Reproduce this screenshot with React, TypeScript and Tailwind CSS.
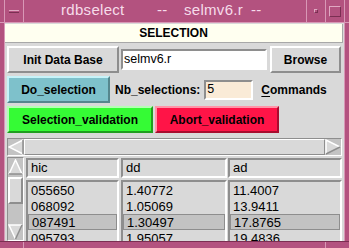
import React from "react";

const raised = "border-2 border-t-white border-l-white border-r-[#8e8e8e] border-b-[#8e8e8e]";
const sunken = "border-2 border-t-[#8e8e8e] border-l-[#8e8e8e] border-r-white border-b-white";
const frameLine = "border-[#d898b6]";

const ArrowLeft = () => (
  <svg width="16" height="16" viewBox="0 0 16 16">
    <polygon points="1,8 15,1 15,15" fill="#d9d9d9" />
    <polyline points="15,1 1,8 15,15" stroke="#ffffff" strokeWidth="1.5" fill="none" />
    <line x1="15" y1="1" x2="15" y2="15" stroke="#8e8e8e" strokeWidth="1.5" />
  </svg>
);

const ArrowRight = () => (
  <svg width="16" height="16" viewBox="0 0 16 16">
    <polygon points="15,8 1,1 1,15" fill="#d9d9d9" />
    <polyline points="1,15 1,1 15,8" stroke="#ffffff" strokeWidth="1.5" fill="none" />
    <line x1="15" y1="8" x2="1" y2="15" stroke="#8e8e8e" strokeWidth="1.5" />
  </svg>
);

const ArrowUp = () => (
  <svg width="15" height="16" viewBox="0 0 15 16">
    <polygon points="7.5,1 1,15 14,15" fill="#d9d9d9" />
    <polyline points="1,15 7.5,1 14,15" stroke="#ffffff" strokeWidth="1.5" fill="none" />
    <line x1="1" y1="15" x2="14" y2="15" stroke="#8e8e8e" strokeWidth="1.5" />
  </svg>
);

const ArrowDown = () => (
  <svg width="15" height="16" viewBox="0 0 15 16">
    <polygon points="7.5,15 1,1 14,1" fill="#d9d9d9" />
    <polyline points="7.5,15 1,1 14,1" stroke="#ffffff" strokeWidth="1.5" fill="none" />
    <line x1="14" y1="1" x2="7.5" y2="15" stroke="#8e8e8e" strokeWidth="1.5" />
  </svg>
);

const columns = [
  { head: "hic", width: "w-[93px] ml-[2px]", rows: ["055650", "068092", "087491", "095793"] },
  { head: "dd", width: "w-[106px] ml-[2px]", rows: ["1.40772", "1.05069", "1.30497", "1.95057"] },
  { head: "ad", width: "w-[114px] ml-[1px]", rows: ["11.4007", "13.9411", "17.8765", "19.4836"] },
];

export default function App() {
  return (
    <div className="w-[349px] h-[248px] bg-[#b3527f] flex flex-col overflow-hidden font-['Liberation_Sans',Arial,sans-serif] text-black">
      {/* window title bar */}
      <div className={`flex h-[23px] shrink-0 border-b ${frameLine}`}>
        <div className={`w-[5px] border-r ${frameLine}`} />
        <div className={`w-[19px] flex items-center justify-center border-r ${frameLine}`}>
          <div className="w-[10px] h-[3px] bg-[#b3527f] border-t border-t-[#e0a8c2] border-b border-b-[#7a2f52]" />
        </div>
        <div className="flex-1 flex items-center pl-[37px] text-[15px] tracking-[0.3px] text-[#f6dcea] whitespace-nowrap pb-[1px]">
          <span className="w-[96px]">rdbselect</span>
          <span className="w-[27px]">--</span>
          <span className="w-[67px]">selmv6.r</span>
          <span>--</span>
        </div>
        <div className={`w-[19px] flex items-center justify-center border-l ${frameLine}`}>
          <div className="w-[4px] h-[4px] bg-[#b3527f] border-t border-l border-t-[#e0a8c2] border-l-[#e0a8c2] border-b border-r border-b-[#7a2f52] border-r-[#7a2f52]" />
        </div>
        <div className={`w-[19px] flex items-center justify-center border-l ${frameLine}`}>
          <div className="w-[12px] h-[11px] border border-t-[#e0a8c2] border-l-[#e0a8c2] border-b-[#7a2f52] border-r-[#7a2f52]" />
        </div>
        <div className={`w-[5px] border-l ${frameLine}`} />
      </div>

      <div className="flex flex-1 min-h-0">
        <div className={`w-[5px] border-r ${frameLine}`} />
        <div className="flex-1 bg-[#d9d9d9] flex flex-col min-w-0">
          {/* SELECTION label */}
          <div className="mt-[1px] mr-[1px] h-[19px] bg-[#fffff0] border-b border-r border-b-[#a8a8a8] border-r-[#a8a8a8] flex items-center justify-center text-[12px] font-bold">
            SELECTION
          </div>

          {/* row 1 */}
          <div className="mt-[3px] h-[27px] flex items-center pl-[2px]">
            <div className={`w-[112px] h-[27px] bg-[#d9d9d9] ${raised} flex items-center justify-center text-[12px] font-bold`}>
              Init Data Base
            </div>
            <div className={`ml-[2px] w-[146px] h-[21px] bg-white ${sunken} flex items-center pl-[1px] text-[12.5px]`}>
              selmv6.r
            </div>
            <div className={`ml-[3px] w-[71px] h-[27px] bg-[#d9d9d9] ${raised} flex items-center justify-center text-[12px] font-bold`}>
              Browse
            </div>
          </div>

          {/* row 2 */}
          <div className="mt-[3px] h-[27px] flex items-center pl-[2px]">
            <div className="w-[103px] h-[27px] bg-[#7ec1cb] border-2 border-t-[#c6f2f8] border-l-[#c6f2f8] border-r-[#55878e] border-b-[#55878e] flex items-center justify-center text-[12px] font-bold">
              Do_selection
            </div>
            <div className="ml-[5px] text-[12px] font-bold">Nb_selections:</div>
            <div className={`ml-[4px] w-[49px] h-[20px] bg-[#faebd7] ${sunken} flex items-center pl-[1px] text-[12.5px]`}>
              5
            </div>
            <div className="ml-[8px] text-[12px] font-bold">
              <span className="underline underline-offset-2">C</span>ommands
            </div>
          </div>

          {/* row 3 */}
          <div className="mt-[3px] h-[27px] flex items-center pl-[2px]">
            <div className="w-[146px] h-[27px] bg-[#35fb35] border-2 border-t-[#b4ffb4] border-l-[#b4ffb4] border-r-[#1f9e1f] border-b-[#1f9e1f] flex items-center justify-center text-[12px] font-bold">
              Selection_validation
            </div>
            <div className="ml-[2px] w-[124px] h-[27px] bg-[#ff1447] border-2 border-t-[#ff94a8] border-l-[#ff94a8] border-r-[#a80c2e] border-b-[#a80c2e] flex items-center justify-center text-[12px] font-bold">
              Abort_validation
            </div>
          </div>

          {/* horizontal scrollbar */}
          <div className="mt-[5px] ml-[2px] mr-[2px] h-[18px] flex items-center bg-[#c3c3c3] border border-t-[#8e8e8e] border-l-[#8e8e8e] border-r-white border-b-white">
            <ArrowLeft />
            <div className="flex-1 h-[16px] bg-[#d9d9d9] border border-t-white border-l-white border-r-[#8e8e8e] border-b-[#8e8e8e]" />
            <ArrowRight />
          </div>

          {/* table area */}
          <div className="mt-[1px] flex-1 min-h-0 flex pl-[2px]">
            <div className="w-[17px] flex flex-col bg-[#c3c3c3] border border-t-[#8e8e8e] border-l-[#8e8e8e] border-r-white border-b-white">
              <div className="h-[17px] flex items-center justify-center">
                <ArrowUp />
              </div>
              <div className="mt-[2px] h-[27px] bg-[#d9d9d9] border-2 border-t-white border-l-white border-r-[#8e8e8e] border-b-[#8e8e8e]" />
              <div className="flex-1" />
              <div className="h-[17px] flex items-center justify-center">
                <ArrowDown />
              </div>
            </div>

            {columns.map((col) => (
              <div key={col.head} className={`${col.width} flex flex-col min-h-0`}>
                <div className={`mt-[1px] h-[20px] shrink-0 ${sunken} flex items-center pl-[3px] text-[13px]`}>
                  {col.head}
                </div>
                <div className={`mt-[2px] flex-1 min-h-0 overflow-hidden ${sunken} border-b-0`}>
                  {col.rows.map((r, i) => (
                    <div
                      key={r}
                      className={`h-[16px] flex items-center pl-[3px] text-[13px] leading-none ${
                        i === 2 ? "bg-[#c3c3c3] border border-[#8e8e8e] pl-[2px]" : ""
                      }`}
                    >
                      {r}
                    </div>
                  ))}
                </div>
              </div>
            ))}
          </div>
        </div>
        <div className={`w-[5px] border-l ${frameLine}`} />
      </div>

      {/* bottom frame */}
      <div className={`h-[7px] shrink-0 border-t border-t-[#7a2f52] flex`}>
        <div className={`w-[24px] border-r ${frameLine}`} />
        <div className="flex-1" />
        <div className={`w-[24px] border-l ${frameLine}`} />
      </div>
    </div>
  );
}
